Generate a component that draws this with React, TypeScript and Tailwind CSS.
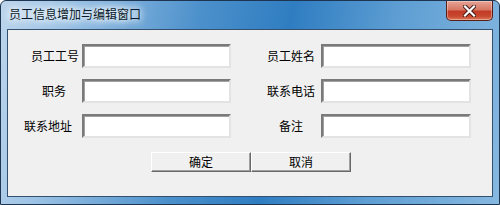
import React from "react";

const font = { fontFamily: '"Noto Sans CJK SC", "Noto Sans", sans-serif' };

type Field = { label: string; pad: string };

const rows: [Field, Field][] = [
  [
    { label: "员工工号", pad: "pl-[23px]" },
    { label: "员工姓名", pad: "pl-[36px]" },
  ],
  [
    { label: "职务", pad: "pl-[34px]" },
    { label: "联系电话", pad: "pl-[36px]" },
  ],
  [
    { label: "联系地址", pad: "pl-[16px]" },
    { label: "备注", pad: "pl-[48px]" },
  ],
];

const TextBox: React.FC<{ width: string }> = ({ width }) => (
  <div
    className={`${width} h-[24px] bg-white border-2 border-t-[#7a7a7a] border-l-[#7a7a7a] border-b-[#e3e3e3] border-r-[#e3e3e3] shadow-[inset_1px_1px_0_#a0a0a0]`}
  />
);

const Button: React.FC<{ children: React.ReactNode }> = ({ children }) => (
  <button className="w-[100px] h-[20px] bg-[#f0f0f0] border border-t-white border-l-white border-b-[#696969] border-r-[#696969] shadow-[inset_-1px_-1px_0_#a0a0a0] text-[12px] leading-none text-black flex items-center justify-center">
    {children}
  </button>
);

const CloseButton: React.FC = () => (
  <div className="w-[47px] h-[20px] mt-[-8px] rounded-b-[5px] border border-t-0 border-[#5b1e17] bg-[linear-gradient(180deg,#e6a395_0%,#d77865_45%,#c23b26_55%,#c8482f_80%,#dd7a5a_100%)] shadow-[inset_0_0_0_1px_rgba(255,255,255,0.35)] flex items-center justify-center">
    <svg width="13" height="12" viewBox="0 0 13 12">
      <path d="M2 1.5 L11 10.5 M11 1.5 L2 10.5" stroke="#3a1410" strokeWidth="4" strokeLinecap="square" />
      <path d="M2 1.5 L11 10.5 M11 1.5 L2 10.5" stroke="#ffffff" strokeWidth="2.2" strokeLinecap="square" />
    </svg>
  </div>
);

export default function App() {
  return (
    <div
      className="w-[500px] h-[205px] rounded-t-[6px] border border-[#1e3551] bg-[linear-gradient(100deg,#bcd5ec_0%,#9fc4e6_12%,#4b90cb_38%,#2f7dc1_55%,#5e9ed3_75%,#86b8e0_100%)] flex flex-col overflow-hidden"
      style={font}
    >
      <div className="h-[28px] flex items-start justify-between pl-[8px] pr-[6px]">
        <div className="h-[26px] flex items-center text-[12px] leading-none text-[#0a1a2a] [text-shadow:0_0_6px_#fff,0_0_8px_#fff,0_0_10px_#e8f2fb]">
          员工信息增加与编辑窗口
        </div>
        <div className="pt-[8px]">
          <CloseButton />
        </div>
      </div>
      <div className="mx-[6px] h-[168px] border border-[#33506e] bg-[#f0f0f0] flex flex-col pt-[14px]">
        <div className="flex flex-col gap-[11px]">
          {rows.map(([l, r], i) => (
            <div key={i} className="flex items-center h-[24px]">
              <div className={`w-[74px] ${l.pad} text-[12px] leading-none text-black whitespace-nowrap`}>
                {l.label}
              </div>
              <TextBox width="w-[149px]" />
              <div className={`w-[90px] ${r.pad} text-[12px] leading-none text-black whitespace-nowrap`}>
                {r.label}
              </div>
              <TextBox width="w-[150px]" />
            </div>
          ))}
        </div>
        <div className="flex pl-[143px] mt-[14px]">
          <Button>确定</Button>
          <Button>取消</Button>
        </div>
      </div>
    </div>
  );
}
